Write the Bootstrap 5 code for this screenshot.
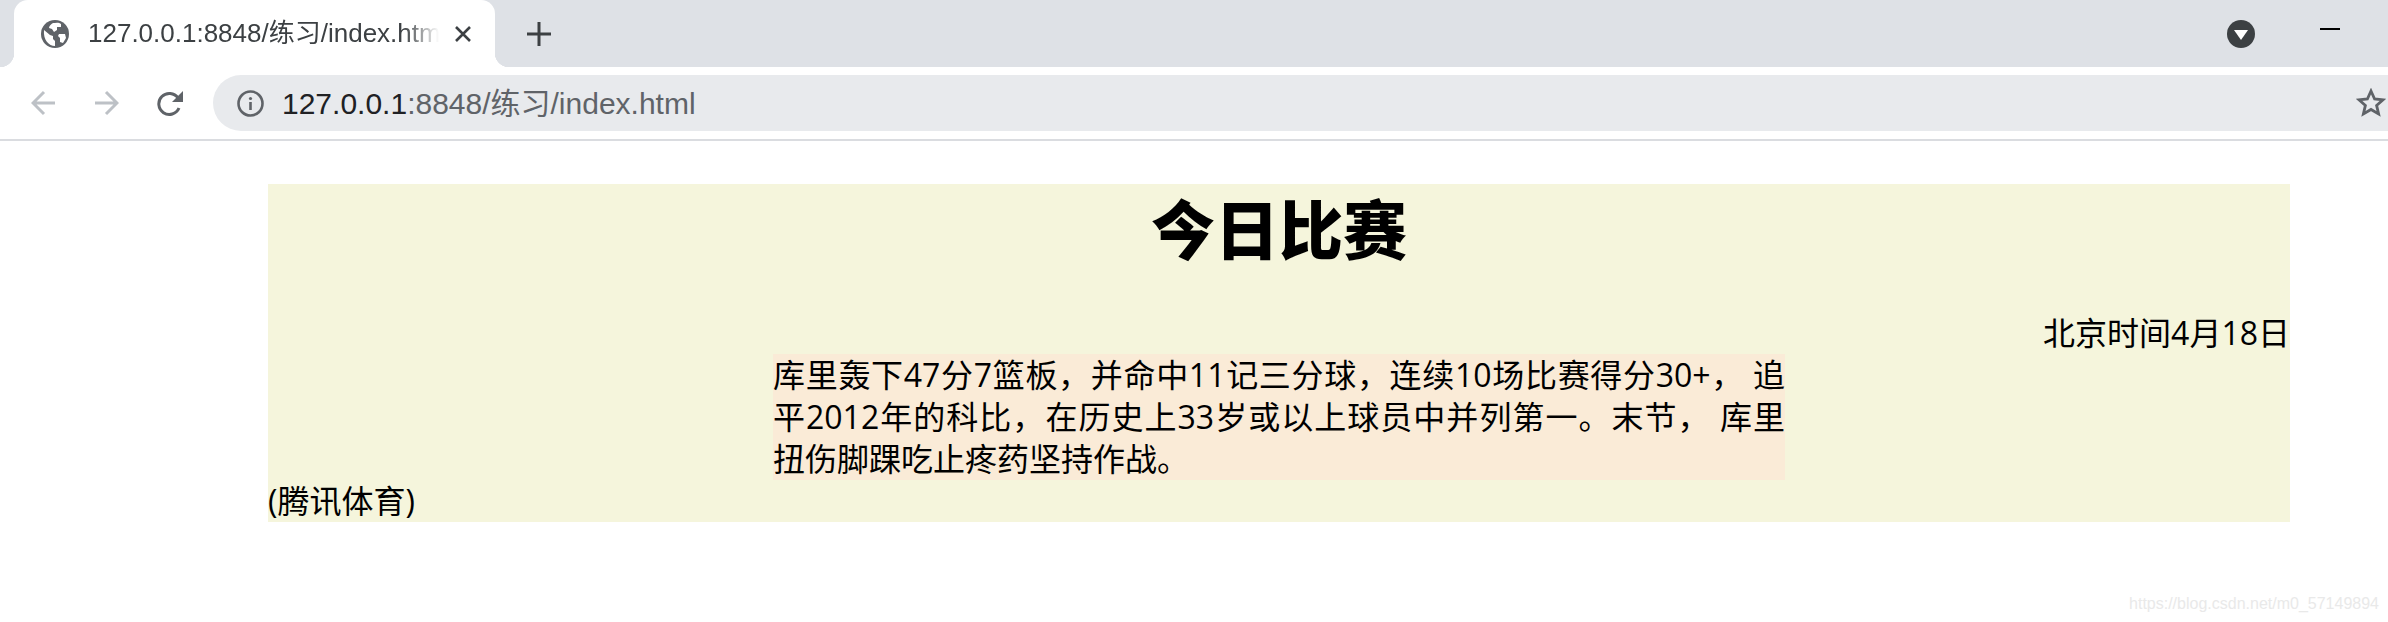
<!DOCTYPE html>
<html lang="zh-CN">
<head>
<meta charset="utf-8">
<title>今日比赛</title>
<link href="https://cdn.jsdelivr.net/npm/bootstrap@5.3.0/dist/css/bootstrap.min.css" rel="stylesheet">
<style>
html,body{height:622px;overflow:hidden;background:#fff;color:#000;font-family:"Open Sans","Noto Sans CJK SC",sans-serif}
.strip{height:67px;background:#dee1e6;padding-left:14px}
.browser-tab{position:relative;width:481px;height:67px;background:#fff;border-radius:14px 14px 0 0;padding-left:27px;font-size:26px;color:#3c4043;font-family:"Liberation Sans","Noto Sans CJK SC",sans-serif}
.browser-tab::before,.browser-tab::after{content:"";position:absolute;bottom:0;width:14px;height:14px}
.browser-tab::before{left:-14px;background:radial-gradient(circle at 0 0,#dee1e6 14px,#fff 14.5px)}
.browser-tab::after{right:-14px;background:radial-gradient(circle at 100% 0,#dee1e6 14px,#fff 14.5px)}
.tab-title{width:351px;margin-left:19px;white-space:nowrap;overflow:hidden;-webkit-mask-image:linear-gradient(90deg,#000 90%,transparent 100%);mask-image:linear-gradient(90deg,#000 90%,transparent 100%)}
.tab-close{margin-left:15px}
.new-tab{margin-left:32px}
.chrome-end{margin-left:auto}
.avatar-ico{margin-right:65px}
.min-ico{width:20px;height:2px;background:#000;margin:0 48px 10px 0}
.toolbar{height:74px;padding:8px 0 8px 31px;border-bottom:2px solid #dadce0}
.nav-ico{flex:none}
.back-ico{margin-right:38px}
.fwd-ico{margin-right:38px}
.reload-ico{margin-right:29px}
.omni{height:56px;background:#e8eaed;border-radius:28px 0 0 28px;padding:0 2px 0 24px;font-size:30px;color:#5f6368;font-family:"Liberation Sans","Noto Sans CJK SC",sans-serif}
.omni-url{margin-left:18px}
.omni-host{color:#202124}
.sheet{margin:43px 98px 0 268px;background:#f5f5dc;font-size:32px;line-height:42px}
.sheet-title{margin:0;height:128px;font-size:64px;line-height:84px;font-weight:900;text-align:center;font-family:"Noto Sans CJK SC",sans-serif}
.sheet-date{text-align:right}
.sheet-body{width:1012px;margin:0 auto 0 505px;background:#faebd7;text-align:justify}
.mark-line{margin:72px 9px 0 0;text-align:right;font:16px/20px "Liberation Sans",sans-serif;color:#e9e9e9}
</style>
</head>
<body>
<header>
  <div class="strip d-flex align-items-center">
    <div class="browser-tab d-flex align-items-center">
      <svg width="28" height="28" viewBox="0 0 28 28" class="nav-ico"><circle cx="14" cy="14" r="14" fill="#5f6368"/><path d="M3 10l6 5 3 1v3l2 2v5C8 26 2 20 3 10zM12 3c2 0 6-1 8 1v3h-4v3l-3 2-2-3-3-1c0-2 2-4 4-5zM18 14h6l1 4-3 5-3-1v-4l-2-2z" fill="#fff"/></svg>
      <div class="tab-title">127.0.0.1:8848/练习/index.html</div>
      <svg width="18" height="18" viewBox="0 0 18 18" class="tab-close nav-ico"><path d="M2 2l14 14M16 2L2 16" stroke="#3c4043" stroke-width="2.6"/></svg>
    </div>
    <svg width="24" height="24" viewBox="0 0 24 24" class="new-tab nav-ico"><path d="M12 0v24M0 12h24" stroke="#3c4043" stroke-width="3"/></svg>
    <svg width="28" height="28" viewBox="0 0 28 28" class="chrome-end avatar-ico nav-ico"><circle cx="14" cy="14" r="14" fill="#3c4043"/><path d="M7 10h14l-7 10z" fill="#fff"/></svg>
    <div class="min-ico"></div>
  </div>
  <div class="toolbar d-flex align-items-center">
    <svg width="25" height="26" viewBox="0 0 25 26" class="back-ico nav-ico"><path d="M24 13H3M13 2L2 13l11 11" fill="none" stroke="#bdc1c6" stroke-width="3"/></svg>
    <svg width="25" height="26" viewBox="0 0 25 26" class="fwd-ico nav-ico"><path d="M1 13h21M12 2l11 11-11 11" fill="none" stroke="#bdc1c6" stroke-width="3"/></svg>
    <svg width="27" height="27" viewBox="0 0 27 27" class="reload-ico nav-ico"><path d="M22 18a10.500 10.500 0 1 1-1-10" fill="none" stroke="#5f6368" stroke-width="3"/><path d="M26 1v11H15z" fill="#5f6368"/></svg>
    <div class="omni flex-grow-1 d-flex align-items-center">
      <svg width="27" height="27" viewBox="0 0 27 27" class="nav-ico"><circle cx="13.500" cy="13.500" r="12" fill="none" stroke="#5f6368" stroke-width="2.600"/><path d="M13.500 12v8" stroke="#5f6368" stroke-width="2.600"/><circle cx="13.500" cy="8.500" r="1.600" fill="#5f6368"/></svg>
      <div class="omni-url"><span class="omni-host">127.0.0.1</span>:8848/练习/index.html</div>
      <svg width="30" height="30" viewBox="0 0 30 30" class="chrome-end nav-ico"><path d="M15 3l3.600 8 8.400.8-6.400 5.600 2 8.600-7.600-4.500L7.400 26l2-8.600L3 11.800l8.400-.8z" fill="none" stroke="#5f6368" stroke-width="2.800"/></svg>
    </div>
  </div>
</header>
<main>
  <section class="sheet">
    <h1 class="sheet-title">今日比赛</h1>
    <div class="sheet-date">北京时间4月18日</div>
    <p class="sheet-body mb-0">库里轰下47分7篮板，并命中11记三分球，连续10场比赛得分30+， 追平2012年的科比，在历史上33岁或以上球员中并列第一。末节， 库里扭伤脚踝吃止疼药坚持作战。</p>
    <div>(腾讯体育)</div>
  </section>
  <div class="mark-line">https://blog.csdn.net/m0_57149894</div>
</main>
<script src="https://cdn.jsdelivr.net/npm/bootstrap@5.3.0/dist/js/bootstrap.bundle.min.js"></script>
</body>
</html>
